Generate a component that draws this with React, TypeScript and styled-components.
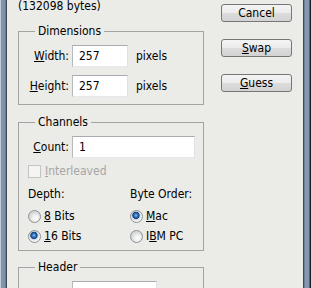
import styled, { createGlobalStyle } from 'styled-components';

const GlobalStyle = createGlobalStyle`
  html, body {
    margin: 0;
    padding: 0;
    background: #ebebe7;
  }
  * {
    box-sizing: border-box;
  }
`;

export default function App() {
  return (
    <>
      <GlobalStyle />
      <Dialog>
        <Edge $side="left" />
        <Body>
          <Main>
            <Info>(132098 bytes)</Info>

            <Group $gap={8} $top={18}>
              <Legend>Dimensions</Legend>
              <FieldRow>
                <Label><u>W</u>idth:</Label>
                <TextBox $width={56} defaultValue="257" />
                <Unit>pixels</Unit>
              </FieldRow>
              <FieldRow>
                <Label><u>H</u>eight:</Label>
                <TextBox $width={56} defaultValue="257" />
                <Unit>pixels</Unit>
              </FieldRow>
            </Group>

            <Group $gap={0} $top={17}>
              <Legend>Channels</Legend>
              <FieldRow>
                <Label><u>C</u>ount:</Label>
                <TextBox $width={123} defaultValue="1" />
              </FieldRow>
              <CheckRow>
                <CheckBox />
                <Disabled><u>I</u>nterleaved</Disabled>
              </CheckRow>
              <Options>
                <OptionColumn>
                  <Caption>Depth:</Caption>
                  <RadioRow $first>
                    <Radio />
                    <span><u>8</u> Bits</span>
                  </RadioRow>
                  <RadioRow>
                    <Radio $checked />
                    <span><u>1</u>6 Bits</span>
                  </RadioRow>
                </OptionColumn>
                <OptionColumn>
                  <Caption>Byte Order:</Caption>
                  <RadioRow $first>
                    <Radio $checked />
                    <span><u>M</u>ac</span>
                  </RadioRow>
                  <RadioRow>
                    <Radio />
                    <span>I<u>B</u>M PC</span>
                  </RadioRow>
                </OptionColumn>
              </Options>
            </Group>

            <Group $gap={8} $top={16}>
              <Legend>Header</Legend>
              <FieldRow>
                <Label />
                <TextBox $width={85} />
              </FieldRow>
            </Group>
          </Main>

          <Buttons>
            <Button>Cancel</Button>
            <Button><u>S</u>wap</Button>
            <Button><u>G</u>uess</Button>
          </Buttons>
        </Body>
        <Edge $side="right" />
      </Dialog>
    </>
  );
}

const Dialog = styled.div`
  display: flex;
  width: 311px;
  height: 288px;
  overflow: hidden;
  background: #ebebe7;
  color: #000;
  font-family: 'DejaVu Sans Condensed', 'Liberation Sans', sans-serif;
  font-size: 12px;
  line-height: 14px;
`;

const Edge = styled.div<{ $side: 'left' | 'right' }>`
  flex: none;
  height: 100%;
  width: ${(p) => (p.$side === 'left' ? '7px' : '8px')};
  background: ${(p) =>
    p.$side === 'left'
      ? 'linear-gradient(to right, #c3ccd6 0 1px, #7f94ac 1px 5px, #687b91 5px 6px, #3f4a58 6px 7px)'
      : 'linear-gradient(to right, #3f4956 0 1px, #6d7f94 1px 2px, #8499b0 2px 6px, #50606f 6px 7px, #1e2329 7px 8px)'};
`;

const Body = styled.div`
  flex: 1;
  display: flex;
  padding: 0 11px;
  gap: 17px;
`;

const Main = styled.div`
  width: 186px;
  display: flex;
  flex-direction: column;
`;

const Info = styled.div`
  margin-top: -1px;
  height: 14px;
`;

const Group = styled.div<{ $gap: number; $top: number }>`
  display: flex;
  flex-direction: column;
  gap: ${(p) => p.$gap}px;
  margin-top: ${(p) => p.$top}px;
  border: 1px solid #a3a3a3;
  padding-bottom: 7px;

  & > :nth-child(2) {
    margin-top: ${(p) => 7 - p.$gap}px;
  }
`;

const Legend = styled.div`
  align-self: flex-start;
  margin: -8px 0 0 16px;
  padding: 0 3px;
  height: 14px;
  background: #ebebe7;
`;

const FieldRow = styled.div`
  display: flex;
  align-items: center;
  height: 22px;
`;

const Label = styled.span`
  width: 50px;
  text-align: right;
  margin-right: 3px;
`;

const TextBox = styled.input<{ $width: number }>`
  width: ${(p) => p.$width}px;
  height: 22px;
  margin: 0;
  padding: 0 0 0 6px;
  border: 1px solid;
  border-color: #a9abb0 #dfe1e5 #e6e8eb #b7b9bd;
  background: #fff;
  font: inherit;
  color: #000;
  outline: none;
`;

const Unit = styled.span`
  margin-left: 8px;
`;

const CheckRow = styled.div`
  display: flex;
  align-items: center;
  gap: 4px;
  height: 14px;
  margin: 6px 0 0 9px;
`;

const CheckBox = styled.span`
  width: 13px;
  height: 13px;
  border: 1px solid #c4c4c4;
  background: #f4f4f2;
`;

const Disabled = styled.span`
  color: #a6a6a6;
`;

const Options = styled.div`
  display: grid;
  grid-template-columns: 102px 1fr;
  margin: 9px 0 0 9px;
`;

const OptionColumn = styled.div`
  display: flex;
  flex-direction: column;
`;

const Caption = styled.span`
  height: 14px;
`;

const RadioRow = styled.div<{ $first?: boolean }>`
  display: flex;
  align-items: center;
  gap: 3px;
  height: 14px;
  margin-top: ${(p) => (p.$first ? 8 : 6)}px;
`;

const Radio = styled.span<{ $checked?: boolean }>`
  width: 13px;
  height: 13px;
  border-radius: 50%;
  border: 1px solid #8d9297;
  background: ${(p) =>
    p.$checked
      ? 'radial-gradient(circle at 45% 40%, #8fc1f0 0, #2a66b4 2px, #17457e 3.3px, #c9d3de 4px, #f2f4f6 5.5px)'
      : 'radial-gradient(circle at 60% 65%, #ffffff 0, #f0f0f0 3px, #d6d7d9 6px)'};
`;

const Buttons = styled.div`
  display: flex;
  flex-direction: column;
  gap: 17px;
  width: 71px;
  margin-top: 4px;
`;

const Button = styled.button`
  height: 18px;
  width: 71px;
  padding: 0;
  border: 1px solid #767676;
  border-radius: 3px;
  background: linear-gradient(#f4f4f4 0%, #ebebeb 50%, #dcdcdc 51%, #d3d3d3 100%);
  font: inherit;
  color: #000;
  text-align: center;
`;
